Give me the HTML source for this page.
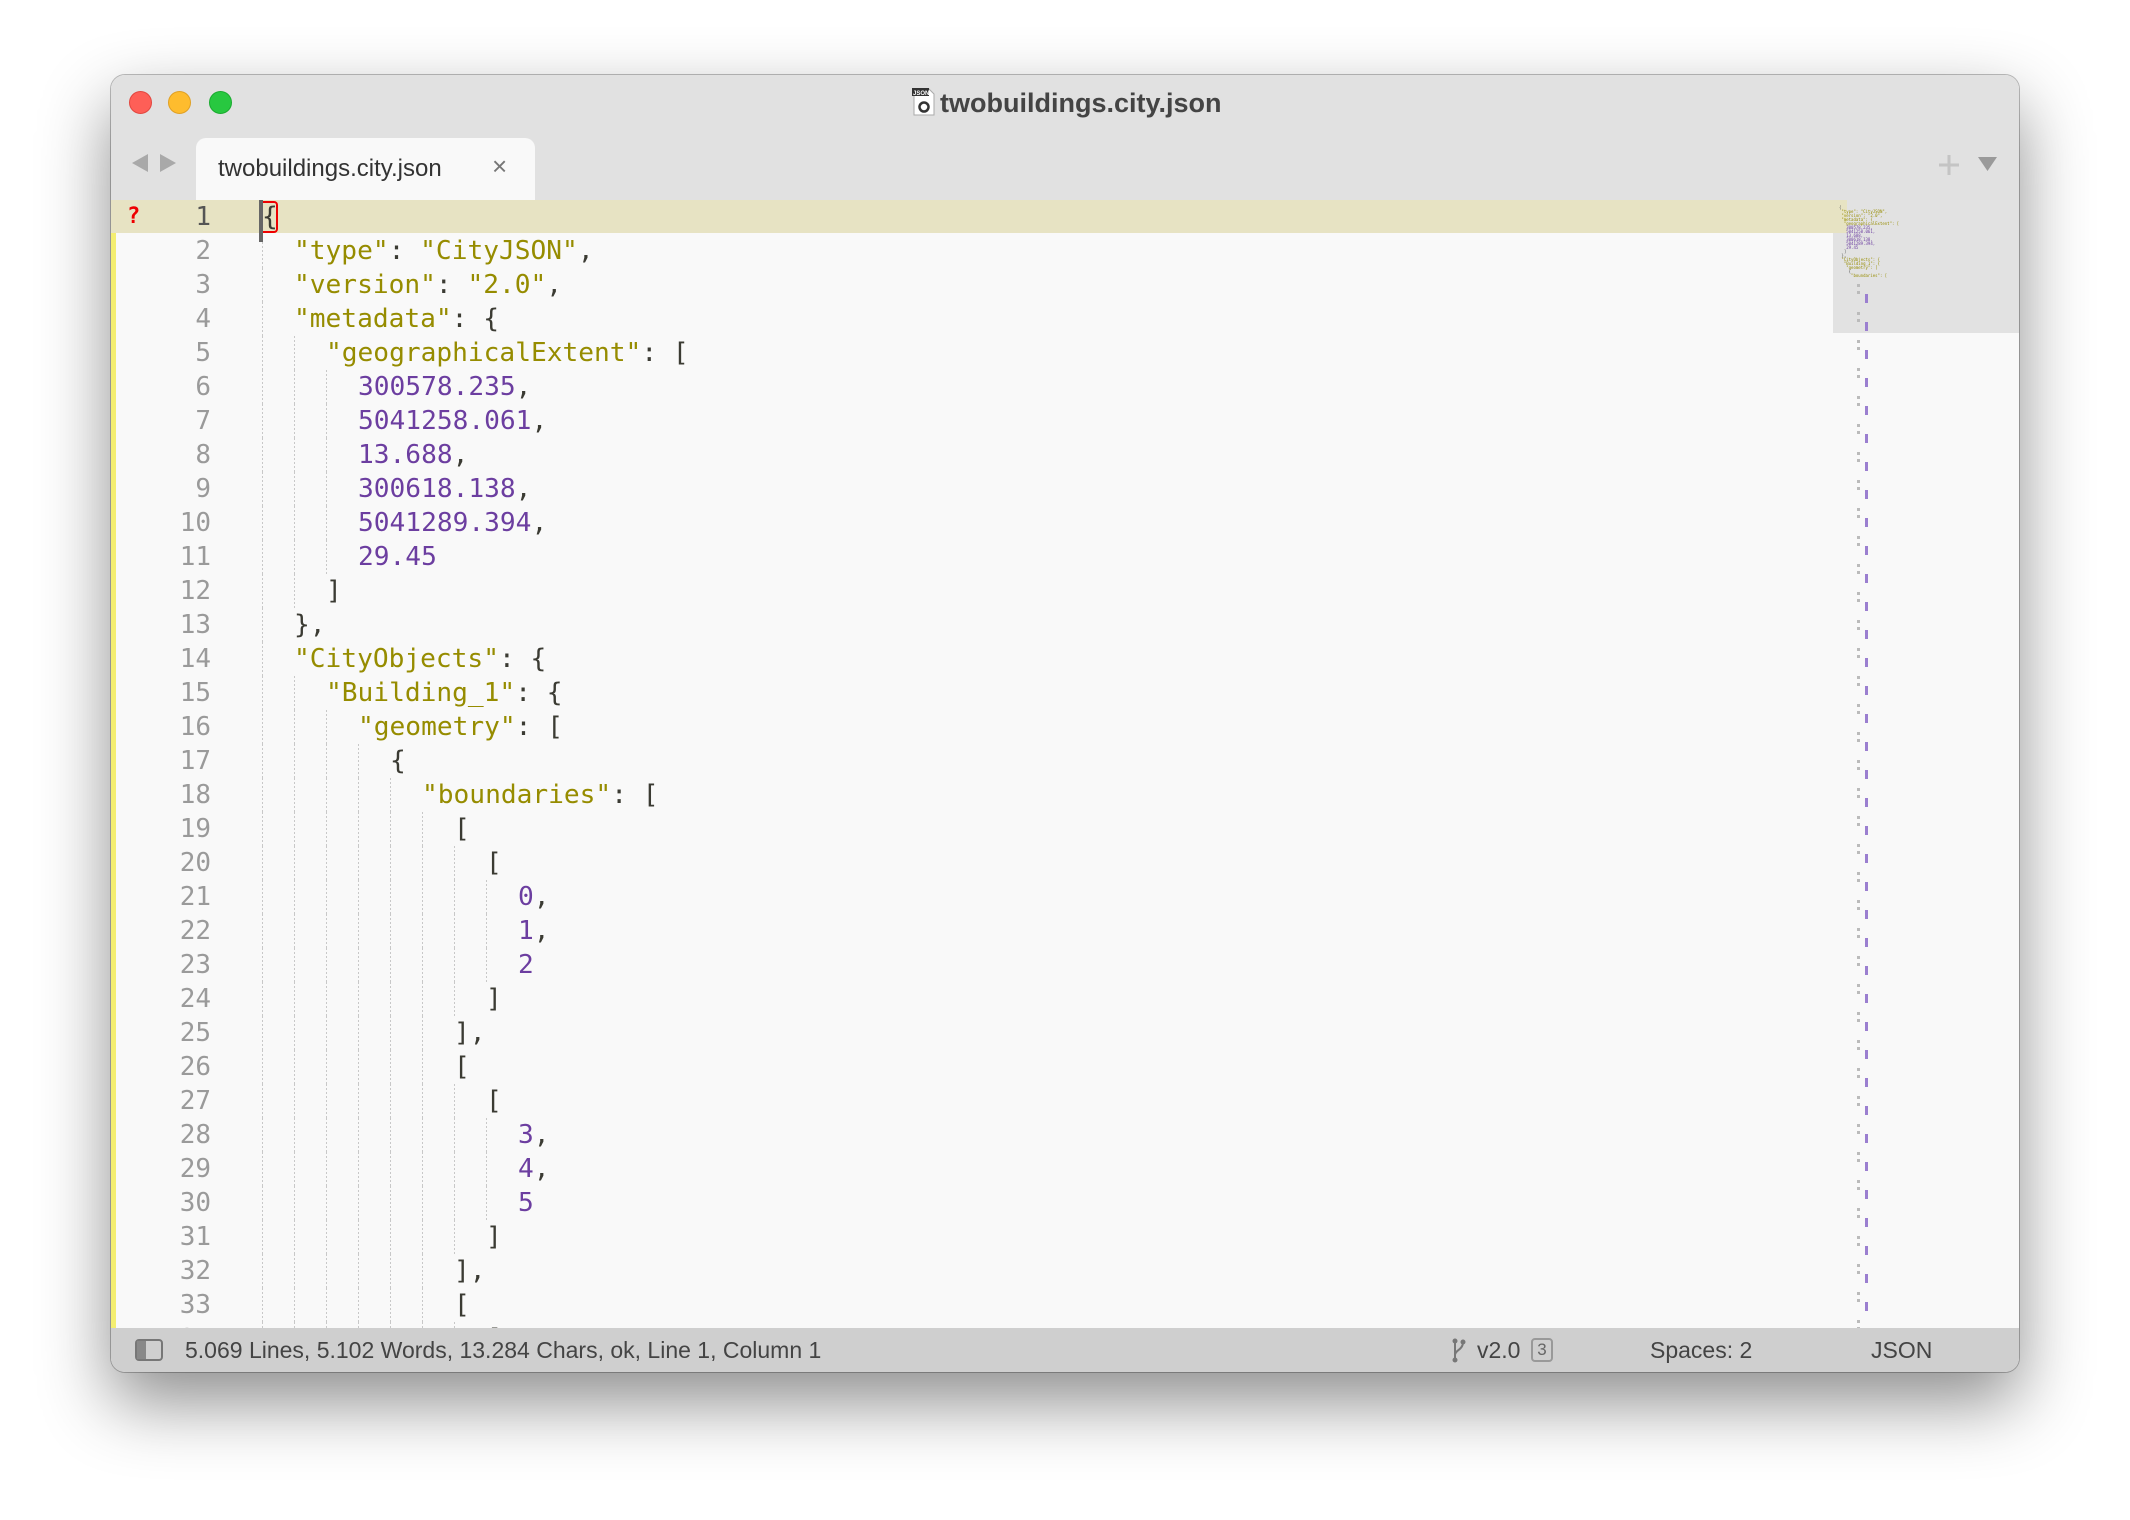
<!DOCTYPE html>
<html><head><meta charset="utf-8"><style>
*{margin:0;padding:0;box-sizing:border-box}
body{width:2130px;height:1520px;background:#fff;position:relative;overflow:hidden;font-family:"Liberation Sans",sans-serif}
.win{position:absolute;left:111px;top:75px;width:1908px;height:1297px;border-radius:14px;overflow:hidden;background:#f9f9f9;box-shadow:0 30px 70px rgba(0,0,0,.45),0 0 0 1px rgba(0,0,0,.25)}
.title{position:absolute;left:0;top:0;width:100%;height:125px;background:#e1e1e1}
.tl{position:absolute;top:16px;width:23px;height:23px;border-radius:50%}
.ttext{position:absolute;left:829px;top:13px;font-weight:bold;font-size:27px;color:#444}
.tab{position:absolute;left:85px;top:63px;width:339px;height:65px;background:#f9f9f9;border-radius:10px 10px 0 0}
.tab span{position:absolute;left:22px;top:17px;font-size:24px;color:#333}
.tab b{position:absolute;left:296px;top:13px;font-size:26px;color:#777;font-weight:normal}
.ed{position:absolute;left:0;top:125px;width:1722px;height:1128px;overflow:hidden}
.hl{position:absolute;left:0;top:0;width:1722px;height:33px;background:#e7e3c3}
.ystrip{position:absolute;left:0;top:33px;width:5px;height:1100px;background:#f4ee70}
.ln{position:absolute;left:0;width:100px;text-align:right;font-family:"DejaVu Sans Mono",monospace;font-size:26px;color:#9a9a9a;line-height:34px}
.code{position:absolute;left:151px;top:0;font-family:"DejaVu Sans Mono",monospace;font-size:26.2px;line-height:34px;color:#3b3b33}
.row{height:34px;position:relative;white-space:pre}
.g{display:inline-block;height:34px;vertical-align:top;background:repeating-linear-gradient(to right,#c8c8c8 0 1px,transparent 1px 32px);-webkit-mask-image:repeating-linear-gradient(to bottom,#000 0 2px,transparent 2px 4px);mask-image:repeating-linear-gradient(to bottom,#000 0 2px,transparent 2px 4px)}
.s{color:#968c00}.n{color:#6c3ea0}
.mm{position:absolute;left:1722px;top:125px;width:186px;height:1128px;background:#f9f9f9;overflow:hidden}
.status{position:absolute;left:0;top:1253px;width:100%;height:44px;background:#cfcfcf;font-size:23px;color:#444}
.status span{position:absolute;top:9px}
</style></head><body>
<div class="win">
 <div class="title">
  <div class="tl" style="left:18px;background:#fe5f57;border:1px solid #e2463f"></div>
  <div class="tl" style="left:57px;background:#febc2e;border:1px solid #e0a023"></div>
  <div class="tl" style="left:98px;background:#28c840;border:1px solid #1aab2f"></div>
  <svg style="position:absolute;left:800px;top:12px" width="26" height="30" viewBox="0 0 26 30"><path d="M3 2h15l5 5v21H3z" fill="#fff" stroke="#aaa"/><rect x="1" y="1" width="17" height="8" fill="#333"/><text x="2" y="8" font-size="6" fill="#fff" font-family="Liberation Sans" font-weight="bold">JSON</text><circle cx="13" cy="20" r="4.5" fill="none" stroke="#333" stroke-width="2.5"/></svg>
  <div class="ttext">twobuildings.city.json</div>
  <svg style="position:absolute;left:20px;top:77px" width="50" height="24"><path d="M17 2 L1 11 L17 20Z" fill="#a9a9a9"/><path d="M29 2 L45 11 L29 20Z" fill="#a9a9a9"/></svg>
  <div class="tab"><span>twobuildings.city.json</span><b>×</b></div>
  <svg style="position:absolute;left:1826px;top:78px" width="80" height="24"><path d="M12 2v20M2 12h20" stroke="#c4c4c4" stroke-width="3"/><path d="M41 4h19l-9.5 14z" fill="#9a9a9a"/></svg>
 </div>
 <div class="ed">
  <div class="hl"></div>
  <div class="ystrip"></div>
  <div style="position:absolute;left:16px;top:0;line-height:34px;color:#e00;font-weight:bold;font-size:22px;font-family:'DejaVu Sans Mono',monospace">?</div>
  <div class="ln" style="top:0;color:#555">1</div>
  <div class="ln" style="top:34px">2<br>3<br>4<br>5<br>6<br>7<br>8<br>9<br>10<br>11<br>12<br>13<br>14<br>15<br>16<br>17<br>18<br>19<br>20<br>21<br>22<br>23<br>24<br>25<br>26<br>27<br>28<br>29<br>30<br>31<br>32<br>33<br>34</div>
  <div class="code"><div class="row">{</div><div class="row"><span class="g" style="width:32px"></span><span class="s">"type"</span>: <span class="s">"CityJSON"</span>,</div><div class="row"><span class="g" style="width:32px"></span><span class="s">"version"</span>: <span class="s">"2.0"</span>,</div><div class="row"><span class="g" style="width:32px"></span><span class="s">"metadata"</span>: {</div><div class="row"><span class="g" style="width:64px"></span><span class="s">"geographicalExtent"</span>: [</div><div class="row"><span class="g" style="width:96px"></span><span class="n">300578.235</span>,</div><div class="row"><span class="g" style="width:96px"></span><span class="n">5041258.061</span>,</div><div class="row"><span class="g" style="width:96px"></span><span class="n">13.688</span>,</div><div class="row"><span class="g" style="width:96px"></span><span class="n">300618.138</span>,</div><div class="row"><span class="g" style="width:96px"></span><span class="n">5041289.394</span>,</div><div class="row"><span class="g" style="width:96px"></span><span class="n">29.45</span></div><div class="row"><span class="g" style="width:64px"></span>]</div><div class="row"><span class="g" style="width:32px"></span>},</div><div class="row"><span class="g" style="width:32px"></span><span class="s">"CityObjects"</span>: {</div><div class="row"><span class="g" style="width:64px"></span><span class="s">"Building_1"</span>: {</div><div class="row"><span class="g" style="width:96px"></span><span class="s">"geometry"</span>: [</div><div class="row"><span class="g" style="width:128px"></span>{</div><div class="row"><span class="g" style="width:160px"></span><span class="s">"boundaries"</span>: [</div><div class="row"><span class="g" style="width:192px"></span>[</div><div class="row"><span class="g" style="width:224px"></span>[</div><div class="row"><span class="g" style="width:256px"></span><span class="n">0</span>,</div><div class="row"><span class="g" style="width:256px"></span><span class="n">1</span>,</div><div class="row"><span class="g" style="width:256px"></span><span class="n">2</span></div><div class="row"><span class="g" style="width:224px"></span>]</div><div class="row"><span class="g" style="width:192px"></span>],</div><div class="row"><span class="g" style="width:192px"></span>[</div><div class="row"><span class="g" style="width:224px"></span>[</div><div class="row"><span class="g" style="width:256px"></span><span class="n">3</span>,</div><div class="row"><span class="g" style="width:256px"></span><span class="n">4</span>,</div><div class="row"><span class="g" style="width:256px"></span><span class="n">5</span></div><div class="row"><span class="g" style="width:224px"></span>]</div><div class="row"><span class="g" style="width:192px"></span>],</div><div class="row"><span class="g" style="width:192px"></span>[</div><div class="row"><span class="g" style="width:224px"></span>[</div></div>
  <div style="position:absolute;left:148px;top:0;width:4px;height:42px;background:#666"></div>
  <div style="position:absolute;left:152px;top:1px;width:15px;height:32px;border:2px solid #e00;border-left:none;border-radius:0 4px 4px 0"></div>
 </div>
 <div class="mm">
  <div style="position:absolute;left:0;top:0;width:186px;height:133px;background:#e2e2e2"></div>
  <div style="position:absolute;left:0;top:0;width:14px;height:33px;background:#e7e3c3"></div>
  <div style="position:absolute;left:6px;top:6px;font-family:'DejaVu Sans Mono',monospace;font-size:4px;line-height:4px;white-space:pre;color:#555">{
 <span class="s">"type": "CityJSON",</span>
 <span class="s">"version": "2.0",</span>
 <span class="s">"metadata": {</span>
  <span class="s">"geographicalExtent": [</span>
   <span class="n">300578.235,</span>
   <span class="n">5041258.061,</span>
   <span class="n">13.688,</span>
   <span class="n">300618.138,</span>
   <span class="n">5041289.394,</span>
   <span class="n">29.45</span>
  ]
 },
 <span class="s">"CityObjects": {</span>
  <span class="s">"Building_1": {</span>
   <span class="s">"geometry": [</span>
    {
     <span class="s">"boundaries": [</span></div>
  <div style="position:absolute;left:24px;top:84px;width:3px;height:1045px;background:repeating-linear-gradient(to bottom,#bbb 0 3px,transparent 3px 7px,#bbb 7px 10px,transparent 10px 28px)"></div>
  <div style="position:absolute;left:32px;top:94px;width:3px;height:1035px;background:repeating-linear-gradient(to bottom,#9b7fd0 0 9px,transparent 9px 28px)"></div>
 </div>
 <div class="status">
  <svg style="position:absolute;left:24px;top:11px" width="28" height="22"><rect x="1" y="1" width="26" height="20" rx="3" fill="none" stroke="#777" stroke-width="2"/><rect x="2" y="2" width="9" height="18" fill="#888"/></svg>
  <span style="left:74px">5.069 Lines, 5.102 Words, 13.284 Chars, ok, Line 1, Column 1</span>
  <svg style="position:absolute;left:1340px;top:10px" width="16" height="26"><circle cx="4" cy="3" r="2.5" fill="#777"/><circle cx="12" cy="4" r="2.5" fill="#777"/><circle cx="4" cy="22" r="2.5" fill="#777"/><path d="M4 3v19M12 4c0 8-8 8-8 13" stroke="#777" stroke-width="2" fill="none"/></svg>
  <span style="left:1366px">v2.0</span>
  <span style="left:1420px;top:10px;width:22px;height:24px;border:2px solid #999;border-radius:4px;font-size:17px;text-align:center;line-height:20px;color:#666">3</span>
  <span style="left:1539px">Spaces: 2</span>
  <span style="left:1760px">JSON</span>
 </div>
</div>
</body></html>
